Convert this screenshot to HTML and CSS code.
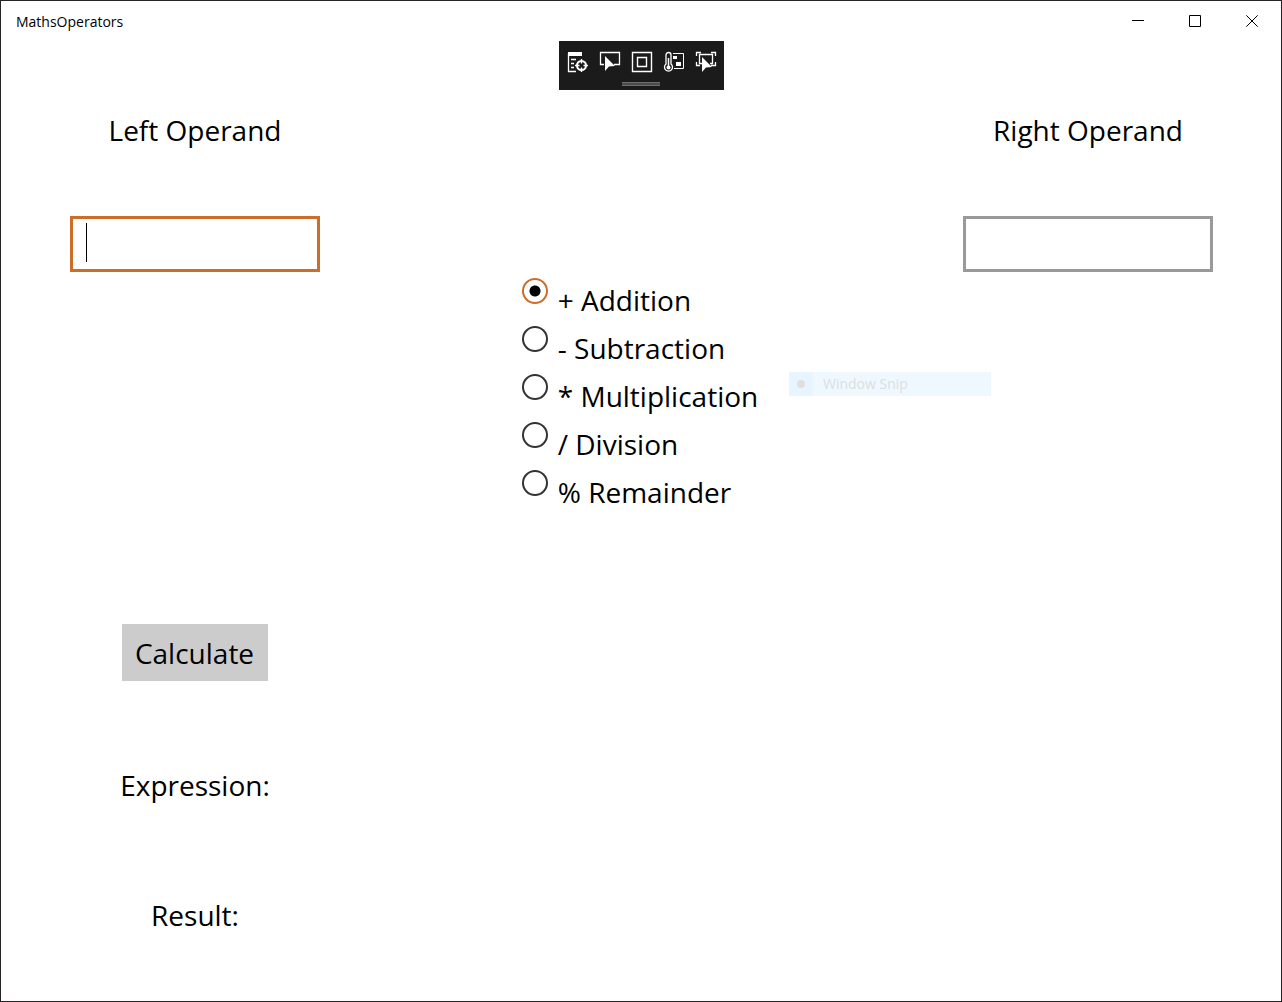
FILE: index.html
```html
<!DOCTYPE html>
<html lang="en">
<head>
<meta charset="utf-8">
<title>MathsOperators</title>
<link rel="stylesheet" href="styles.css">
</head>
<body>
<div class="window">
  <header class="titlebar">
    <span class="title">MathsOperators</span>
    <div class="caption-buttons">
      <button type="button" class="caption-button" aria-label="Minimize"><svg width="12" height="12" viewBox="0 0 12 12"><path d="M0 5.500h12"/></svg></button>
      <button type="button" class="caption-button" aria-label="Maximize"><svg width="12" height="12" viewBox="0 0 12 12"><path d="M.5.5h11v11H.5z"/></svg></button>
      <button type="button" class="caption-button" aria-label="Close"><svg width="12" height="12" viewBox="0 0 12 12"><path d="M.3.3l11.400 11.400M11.700.3L.3 11.700"/></svg></button>
    </div>
  </header>

  <div class="debug-bar">
    <div class="debug-tools">
      <button type="button" class="debug-button" aria-label="Live visual tree"><svg width="22" height="22" viewBox="0 0 22 22"><path d="M1 1h14v4H1z" fill="#fff" stroke="none"/><path d="M1.500 2v18.500H9M4 8.500h5M4 12.500h3M4 16.500h3" stroke-width="1.300"/><circle cx="14.500" cy="14.500" r="4.500" stroke-width="2"/><path d="M14.500 8v4.500M14.500 16.500V21M8 14.500h4.500M16.500 14.500H21" stroke-width="1.400"/></svg></button>
      <button type="button" class="debug-button" aria-label="Select element"><svg width="22" height="22" viewBox="0 0 22 22"><path d="M5 13.500H1.500v-12h19v12H15" stroke-width="1.300"/><path d="M6 5v15l4-4.500 6-.5z" fill="#fff" stroke="none"/></svg></button>
      <button type="button" class="debug-button" aria-label="Display layout adorners"><svg width="22" height="22" viewBox="0 0 22 22"><path d="M1.500 1.500h19v19h-19zM6.500 6.500h9v9h-9z" stroke-width="1.400"/></svg></button>
      <button type="button" class="debug-button" aria-label="Hot reload"><svg width="22" height="22" viewBox="0 0 22 22"><path d="M3 13V4a2.500 2.500 0 0 1 5 0v9a4 4 0 1 1-5 0z" stroke-width="1.300"/><path d="M5.500 7v9" stroke-width="1.500"/><circle cx="5.500" cy="16.500" r="2" fill="#fff" stroke="none"/><path d="M10 2.500h10.500v15H11"/><path d="M10 5h4v3h-4zM13 11h5v4h-5z" fill="#fff" stroke="none"/></svg></button>
      <button type="button" class="debug-button" aria-label="Track focused element"><svg width="22" height="22" viewBox="0 0 22 22"><path d="M1.500 5V1.500H6M16 1.500h4.500V5M1.500 11v3.500H5M16 14.500h4.500V11M7 12.500H4.500v-9h13v9H15" stroke-width="1.300"/><path d="M7 6v15l4-4.500 6-.5z" fill="#fff" stroke="none"/></svg></button>
    </div>
    <div class="debug-grip"></div>
  </div>

  <form class="calculator">
    <label class="left-label" for="left">Left Operand</label>
    <label class="right-label" for="right">Right Operand</label>
    <div class="left-field">
      <input class="operand focused" id="left" type="text">
      <span class="caret"></span>
    </div>
    <input class="operand right-field" id="right" type="text">
    <div class="operators" role="radiogroup" aria-label="Operator">
      <label class="operator"><input type="radio" name="operator" checked>+ Addition</label>
      <label class="operator"><input type="radio" name="operator">- Subtraction</label>
      <label class="operator"><input type="radio" name="operator">* Multiplication</label>
      <label class="operator"><input type="radio" name="operator">/ Division</label>
      <label class="operator"><input type="radio" name="operator">% Remainder</label>
    </div>
    <button class="calculate" type="button">Calculate</button>
    <output class="expression">Expression:</output>
    <output class="result">Result:</output>
  </form>

  <div class="snip-menu"><span class="snip-mark"></span><span class="snip-text">Window Snip</span></div>
</div>
</body>
</html>
```
FILE: styles.css
```css
* {
  box-sizing: border-box;
}

body {
  margin: 0;
  font-family: "Open Sans", "Noto Sans", sans-serif;
  color: #000;
  background: #fff;
}

button {
  padding: 0;
  border: 0;
  background: none;
  font: inherit;
  color: inherit;
}

svg {
  display: block;
  fill: none;
}

.window {
  position: relative;
  min-height: 100vh;
  border: 1px solid #262424;
}

.titlebar {
  display: flex;
  justify-content: space-between;
  align-items: center;
  height: 40px;
  padding: 0 1px 0 15px;
}

.title {
  padding-top: 2px;
  font-size: 14px;
  line-height: 20px;
}

.caption-buttons {
  display: flex;
}

.caption-button {
  display: grid;
  place-items: center;
  width: 57px;
  height: 40px;
  stroke: #000;
}

.debug-bar {
  position: absolute;
  top: 40px;
  left: calc(50% - 82px);
  width: 165px;
  height: 49px;
  padding-top: 10px;
  background: #1b1b1b;
}

.debug-tools {
  display: flex;
  justify-content: center;
  gap: 10px;
}

.debug-button {
  stroke: #fff;
}

.debug-grip {
  width: 38px;
  height: 4px;
  margin: 9px auto 0 63px;
  background: #4c4c4c;
  border: solid #6c6c6c;
  border-width: 1px 0;
}

.calculator {
  display: grid;
  grid-template-columns: 250px 1fr 250px;
  grid-template-rows: 105px 61px 347px 142px 130px 38px;
  justify-items: center;
  align-items: start;
  padding: 70px 68px 64px 69px;
  font-size: 28px;
  line-height: 38px;
}

.left-label {
  grid-area: 1 / 1;
}

.right-label {
  grid-area: 1 / 3;
}

.left-field {
  grid-area: 2 / 1;
  position: relative;
  width: 100%;
}

.right-field {
  grid-area: 2 / 3;
}

.operand {
  display: block;
  width: 100%;
  height: 56px;
  padding: 0 13px;
  border: 3px solid #999;
  background: #fff;
  font: inherit;
  outline: 0;
}

.focused {
  border-color: #cc6d2a;
}

.caret {
  position: absolute;
  top: 7px;
  left: 16px;
  width: 1px;
  height: 39px;
  background: #000;
}

.operators {
  grid-area: 3 / 2;
  padding-right: 3px;
}

.operator {
  display: flex;
  align-items: flex-start;
  gap: 10px;
  height: 48px;
  line-height: 46px;
}

.operator input {
  appearance: none;
  width: 26px;
  height: 26px;
  margin: 1px 0 0;
  border: 2px solid #333;
  border-radius: 50%;
}

.operator input:checked {
  border-color: #cc6d2a;
  background: radial-gradient(circle, #000 5px, #fff 6px);
}

.calculate {
  grid-area: 4 / 1;
  height: 57px;
  padding: 0 14px 0 13px;
  background: #ccc;
}

.expression {
  grid-area: 5 / 1;
}

.result {
  grid-area: 6 / 1;
}

.snip-menu {
  position: absolute;
  top: 371px;
  left: calc(50% + 148px);
  display: flex;
  align-items: center;
  width: 202px;
  height: 24px;
  background: #f0f8ff;
  font-size: 14px;
  line-height: 24px;
  color: #dedede;
}

.snip-mark {
  display: grid;
  place-items: center;
  width: 24px;
  height: 24px;
  margin-right: 10px;
  background: #e8f4ff;
}

.snip-mark::before {
  content: "";
  width: 8px;
  height: 8px;
  border-radius: 50%;
  background: #dfdfdf;
}
```
